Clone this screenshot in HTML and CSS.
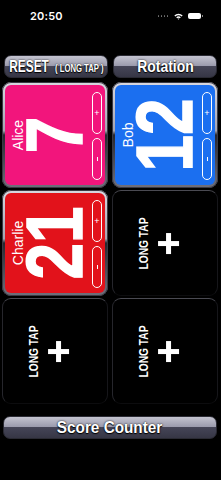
FILE: index.html
```html
<!DOCTYPE html>
<html lang="en">
<head>
    <meta charset="UTF-8">
    <meta name="viewport" content="width=device-width, initial-scale=1.0">
    <title>Score Counter</title>
    <link rel="stylesheet" href="styles.css">
</head>
<body>
    <div class="status">
        <span class="time">20:50</span>
        <div class="status-icons">
            <span class="dots"><i></i><i></i><i></i><i></i></span>
            <svg width="9" height="7" viewBox="0 0 9 7">
                <path d="M0.3 2.4 A6 6 0 0 1 8.7 2.4 L7.6 3.5 A4.4 4.4 0 0 0 1.4 3.5 Z" fill="#fff"/>
                <path d="M2.2 4.3 A3.4 3.4 0 0 1 6.8 4.3 L5.8 5.3 A2 2 0 0 0 3.2 5.3 Z" fill="#fff"/>
                <path d="M3.7 5.8 A1.1 1.1 0 0 1 5.3 5.8 L4.5 6.7 Z" fill="#fff"/>
            </svg>
            <span class="battery"><b></b></span>
        </div>
    </div>

    <div class="toolbar">
        <div class="gloss-btn"><span class="squeeze reset">RESET <small>( LONG TAP )</small></span></div>
        <div class="gloss-btn"><span class="squeeze rot">Rotation</span></div>
    </div>

    <div class="board">
        <div class="card">
            <div class="face pink">
                <div class="main"><div class="turned"><span class="name">Alice</span><span class="score">7</span></div></div>
                <div class="pills"><div class="pill"><span>+</span></div><div class="pill"><span class="minus"></span></div></div>
            </div>
        </div>
        <div class="card">
            <div class="face blue">
                <div class="main"><div class="turned"><span class="name">Bob</span><span class="score">12</span></div></div>
                <div class="pills"><div class="pill"><span>+</span></div><div class="pill"><span class="minus"></span></div></div>
            </div>
        </div>
        <div class="card">
            <div class="face red">
                <div class="main"><div class="turned"><span class="name">Charlie</span><span class="score">21</span></div></div>
                <div class="pills"><div class="pill"><span>+</span></div><div class="pill"><span class="minus"></span></div></div>
            </div>
        </div>
        <div class="slot">
            <div class="main"><div class="turned"><span class="tap">LONG TAP</span><span class="cross"></span></div></div>
            <div class="pills hidden"></div>
        </div>
        <div class="slot">
            <div class="main"><div class="turned"><span class="tap">LONG TAP</span><span class="cross"></span></div></div>
            <div class="pills hidden"></div>
        </div>
        <div class="slot">
            <div class="main"><div class="turned"><span class="tap">LONG TAP</span><span class="cross"></span></div></div>
            <div class="pills hidden"></div>
        </div>
    </div>

    <div class="gloss-btn footer"><span class="squeeze foot">Score Counter</span></div>
</body>
</html>
```

FILE: styles.css
```css
body { margin: 0; background: #000; width: 221px; height: 480px; overflow: hidden; font-family: "Liberation Sans", Arial, sans-serif; color: #fff; }

.status { height: 32px; display: flex; align-items: center; justify-content: space-between; padding: 0 20px 0 30px; }
.time { font-family: Inter, "Liberation Sans", sans-serif; font-weight: 600; font-size: 11px; letter-spacing: 0.2px; }
.status-icons { display: flex; align-items: center; gap: 5px; }
.dots { display: flex; gap: 1.5px; margin-right: 1px; }
.dots i { width: 1.5px; height: 1.5px; border-radius: 50%; background: #777; }
.battery { width: 13px; height: 6px; border-radius: 2px; background: #fff; position: relative; }
.battery b { position: absolute; right: -2px; top: 2px; width: 1px; height: 2px; background: #888; }

.toolbar { display: flex; gap: 5px; padding: 0 4px; margin-top: 23px; }
.toolbar .gloss-btn { flex: 1 1 0; min-width: 0; }

.gloss-btn {
    height: 23px; border-radius: 7px; box-sizing: border-box; border: 1px solid #2a2a33;
    background: linear-gradient(to bottom, #c4c4d0 0%, #9a9aac 48%, #454557 50%, #363645 100%);
    display: flex; align-items: center; justify-content: center;
    font-weight: bold; font-size: 17px; color: #fff;
    text-shadow: 0 0 2px #000, 0 1px 1px #000;
}
.squeeze { display: inline-block; white-space: nowrap; }
.reset { transform: scaleX(0.7); }
.rot { transform: scaleX(0.82); }
.foot { transform: scaleX(0.9); }
.gloss-btn small { font-size: 11px; margin-left: 4px; }
.footer { margin: 12px 4px 0 3px; }

.board { display: grid; grid-template-columns: 106px 106px; grid-auto-rows: 106px; column-gap: 4px; row-gap: 2px; padding: 4px 3px 0 2px; }

.card {
    border-radius: 9px; padding: 3px;
    background: linear-gradient(to bottom, #d8d8e0 0%, #a4a4b0 46%, #26262e 50%, #70707c 100%);
    box-shadow: inset 0 0 0 1px #3a3a44;
}
.face { height: 100%; border-radius: 6px; display: flex; }
.pink { background: #f2157c; }
.blue { background: #1b6ff0; }
.red { background: #e2121b; }

.main { flex: 1; min-width: 0; display: flex; align-items: center; justify-content: center; }
.turned { transform: rotate(-90deg); display: flex; flex-direction: column; align-items: center; white-space: nowrap; }
.name { font-size: 14px; line-height: 14px; }
.score {
    display: inline-block; transform: scaleX(0.82);
    font-weight: bold; font-size: 80px; line-height: 60px; -webkit-text-stroke: 1.5px #fff;
}

.pills { flex-shrink: 0; width: 10px; margin-right: 3px; padding: 7px 0 5px; display: flex; flex-direction: column; gap: 4px; }
.pill { flex: 1; border: 1.5px solid #fff; border-radius: 5px; display: flex; align-items: center; justify-content: center; font-size: 9px; line-height: 9px; }
.minus { width: 1px; height: 4px; background: #fff; }
.hidden { visibility: hidden; }

.slot {
    display: flex; border-radius: 9px; padding: 3px;
    border-top: 1px solid #4a4a52; border-left: 1px solid #26262c; border-right: 1px solid #16161a; border-bottom: 1px solid #0c0c0e;
    box-sizing: border-box;
}
.tap { display: inline-block; transform: scaleX(0.85); font-weight: bold; font-size: 12px; line-height: 12px; }
.cross { position: relative; width: 21px; height: 21px; margin-top: 8px; }
.cross::before, .cross::after { content: ""; position: absolute; background: #fff; }
.cross::before { left: 0; right: 0; top: 8px; height: 5px; }
.cross::after { top: 0; bottom: 0; left: 8px; width: 5px; }
```
